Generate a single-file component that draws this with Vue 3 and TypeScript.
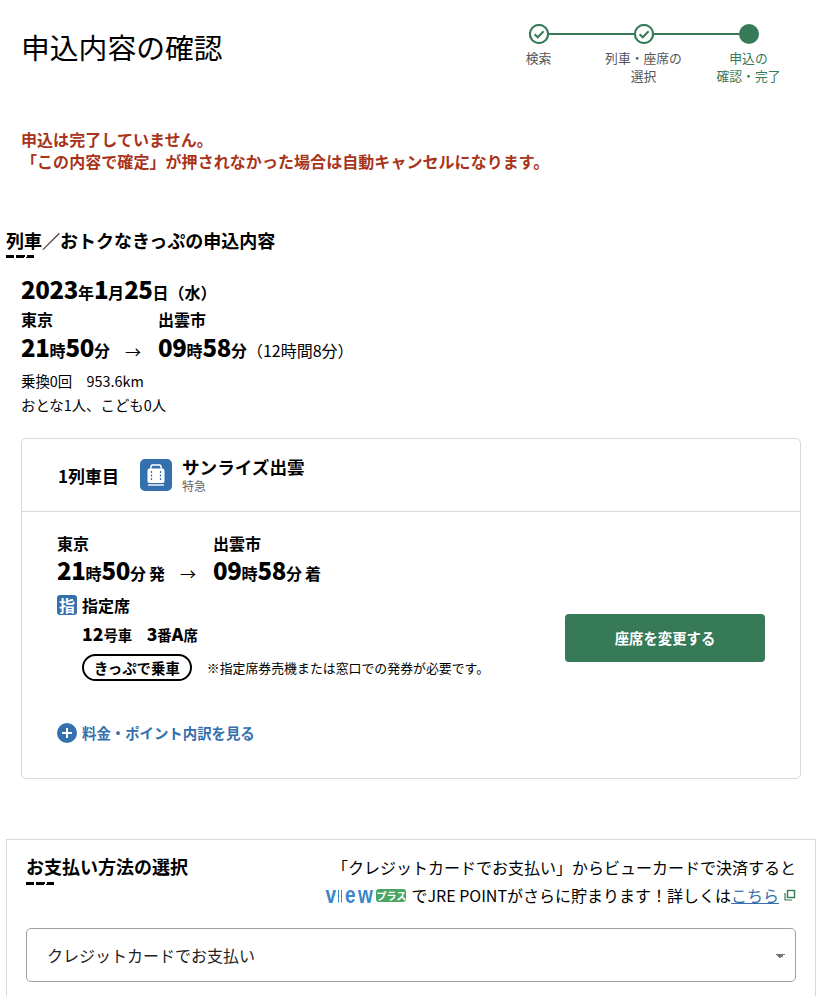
<script setup lang="ts">
import { ref } from 'vue'

interface Step {
  label: string[]
  done: boolean
}

const steps: Step[] = [
  { label: ['検索'], done: true },
  { label: ['列車・座席の', '選択'], done: true },
  { label: ['申込の', '確認・完了'], done: false }
]

const payment = ref('credit')
</script>

<template>
  <div class="page">
    <header class="top">
      <h1 class="title">申込内容の確認</h1>
      <ol class="stepper">
        <li v-for="(step, i) in steps" :key="i" class="step" :class="{ current: !step.done }">
          <span class="dot">
            <svg v-if="step.done" width="20" height="20" viewBox="0 0 20 20" fill="none">
              <circle cx="10" cy="10" r="9" fill="#fff" stroke="#367a58" stroke-width="2" />
              <path d="M5.6 10.200l3.200 3.100 5.800-6" stroke="#367a58" stroke-width="2" />
            </svg>
          </span>
          <span class="step-label">
            <template v-for="line in step.label" :key="line">{{ line }}<br /></template>
          </span>
        </li>
      </ol>
    </header>

    <p class="warning">
      申込は完了していません。<br />
      「この内容で確定」が押されなかった場合は自動キャンセルになります。
    </p>

    <h2 class="section-title outer">列車／おトクなきっぷの申込内容</h2>

    <section class="summary">
      <div class="date"><b>2023</b>年<b>1</b>月<b>25</b>日<span class="dow">（水）</span></div>
      <div class="route">
        <div class="stop">
          <div class="station">東京</div>
          <div class="time"><b>21</b>時<b>50</b>分</div>
        </div>
        <span class="arrow">→</span>
        <div class="stop">
          <div class="station">出雲市</div>
          <div class="time"><b>09</b>時<b>58</b>分<span class="duration">（12時間8分）</span></div>
        </div>
      </div>
      <p class="meta first">乗換0回　953.6km</p>
      <p class="meta">おとな1人、こども0人</p>
    </section>

    <section class="card">
      <div class="card-head">
        <span class="nth">1列車目</span>
        <span class="train-icon">
          <svg width="22" height="24" viewBox="0 0 22 24" fill="none">
            <path d="M5.500 6l.8-3.200c.2-.6.6-.9 1.200-.9h7c.6 0 1 .3 1.200.9l.8 3.200" stroke="#fff" stroke-width="1.500" />
            <path d="M4.500 5.500h13c1.200 0 2 .8 2 2v10.500c0 1.200-.8 2-2 2h-13c-1.200 0-2-.8-2-2V7.500c0-1.200.8-2 2-2z" fill="#fff" />
            <path d="M3 22h16" stroke="#fff" stroke-width="1.400" />
            <path d="M6.500 8v10M15.500 8v10" stroke="#3370ad" stroke-width="1.200" stroke-dasharray="2 1.500" />
          </svg>
        </span>
        <div class="train-name">
          <div class="name">サンライズ出雲</div>
          <div class="kind">特急</div>
        </div>
      </div>

      <div class="card-body">
        <div class="card-route">
          <div class="card-stop">
            <div class="station">東京</div>
            <div class="time"><b>21</b>時<b>50</b>分<span class="suffix">発</span></div>
          </div>
          <span class="arrow">→</span>
          <div class="card-stop">
            <div class="station">出雲市</div>
            <div class="time"><b>09</b>時<b>58</b>分<span class="suffix">着</span></div>
          </div>
        </div>

        <div class="seat-row">
          <div>
            <div class="seat-type"><span class="seat-badge">指</span>指定席</div>
            <div class="seat-no"><b>12</b>号車　<b>3</b>番<b>A</b>席</div>
            <div class="ticket-row">
              <span class="pill">きっぷで乗車</span>
              <span class="note">※指定席券売機または窓口での発券が必要です。</span>
            </div>
          </div>
          <button class="change-btn" type="button">座席を変更する</button>
        </div>

        <a class="detail-link" href="#">
          <svg width="20" height="20" viewBox="0 0 20 20">
            <circle cx="10" cy="10" r="10" fill="#3370ad" />
            <path d="M10 5v10M5 10h10" stroke="#fff" stroke-width="2" />
          </svg>
          料金・ポイント内訳を見る
        </a>
      </div>
    </section>

    <section class="payment">
      <div class="payment-head">
        <h2 class="section-title">お支払い方法の選択</h2>
        <div class="promo">
          <div>「クレジットカードでお支払い」からビューカードで決済すると</div>
          <div class="promo-line">
            <span class="view-logo">v<i class="view-bars"></i>ew</span>
            <span class="plus-badge">プラス</span>
            <span>でJRE POINTがさらに貯まります！詳しくは<a class="here" href="#">こちら</a></span>
            <svg class="ext" width="12" height="12" viewBox="0 0 12 12" fill="none" stroke="#367a58">
              <rect x="3.500" y="1.500" width="7" height="7" stroke-width="1.400" />
              <path d="M1 4v7h7" stroke-width="1.200" />
            </svg>
          </div>
        </div>
      </div>
      <select v-model="payment" class="pay-select">
        <option value="credit">クレジットカードでお支払い</option>
      </select>
    </section>
  </div>
</template>

<style scoped>
.page {
  width: 820px;
  height: 996px;
  overflow: hidden;
  background: #fff;
  color: #000;
  font-family: "Noto Sans CJK JP", "Noto Sans", sans-serif;
  box-sizing: border-box;
}

.top {
  display: flex;
  justify-content: space-between;
  padding: 24px 19px 0 21px;
}

.title {
  margin: 0;
  padding-top: 2px;
  font-size: 28.8px;
  line-height: 42px;
  font-weight: 400;
}

.stepper {
  display: grid;
  grid-template-columns: repeat(3, 105px);
  margin: 0;
  padding: 0;
  list-style: none;
}

.step {
  position: relative;
  display: flex;
  flex-direction: column;
  align-items: center;
  color: #555;
}

.step:not(:last-child)::after {
  content: "";
  position: absolute;
  top: 9px;
  left: 50%;
  width: 100%;
  height: 2px;
  background: #367a58;
}

.dot {
  position: relative;
  z-index: 1;
  width: 20px;
  height: 20px;
  border-radius: 50%;
  background: #367a58;
}

.dot svg {
  display: block;
}

.step.current {
  color: #367a58;
}

.step-label {
  margin-top: 5px;
  font-size: 12.8px;
  line-height: 18px;
  text-align: center;
}

.warning {
  margin: 43px 0 0 21px;
  color: #a8341a;
  font-size: 16px;
  line-height: 22px;
  font-weight: 700;
  letter-spacing: 0.06px;
}

.section-title {
  position: relative;
  margin: 0;
  font-size: 18px;
  line-height: 26px;
  font-weight: 700;
}

.section-title::after {
  content: "";
  position: absolute;
  left: 0;
  bottom: -5px;
  width: 28px;
  height: 3px;
  background: repeating-linear-gradient(110deg, #000 0 8px, transparent 8px 10px);
}

.section-title.outer {
  margin: 55px 0 0 6px;
}

.summary {
  margin: 20px 0 0 21px;
}

.date {
  font-size: 16px;
  line-height: 31px;
  font-weight: 700;
}

.date b,
.time b {
  font-size: 24px;
  letter-spacing: -0.4px;
}

.dow {
  font-size: 16px;
}

.route {
  display: flex;
  align-items: flex-end;
}

.stop:first-child {
  width: 104px;
}

.route .arrow {
  width: 33px;
  line-height: 30px;
}

.route .time {
  padding-top: 1px;
}

.arrow {
  font-size: 16px;
  font-weight: 400;
}

.station {
  font-size: 16px;
  line-height: 22px;
  font-weight: 700;
}

.time {
  font-size: 16px;
  line-height: 32px;
  font-weight: 700;
  white-space: nowrap;
}

.duration {
  font-size: 16px;
  font-weight: 400;
}

.meta {
  margin: 0;
  font-size: 14.4px;
  line-height: 24px;
}

.meta.first {
  margin-top: 3px;
}

.card {
  margin: 21px 19px 0 21px;
  border: 1px solid #d9d9d9;
  border-radius: 5px;
}

.card-head {
  display: flex;
  align-items: center;
  height: 72px;
  padding-left: 36px;
  border-bottom: 1px solid #d9d9d9;
}

.nth {
  width: 82px;
  font-size: 17px;
  font-weight: 700;
}

.train-icon {
  display: flex;
  align-items: center;
  justify-content: center;
  width: 32px;
  height: 32px;
  margin-right: 10px;
  border-radius: 5px;
  background: #3370ad;
}

.name {
  font-size: 17.6px;
  line-height: 22px;
  font-weight: 700;
}

.kind {
  color: #666;
  font-size: 12px;
  line-height: 16px;
}

.card-body {
  padding: 20px 35px 33px 35px;
}

.card-route {
  display: flex;
  align-items: flex-end;
}

.card-stop:first-child {
  width: 123px;
}

.card-route .arrow {
  width: 33px;
  line-height: 32px;
}

.suffix {
  margin-left: 3px;
  font-size: 16px;
}

.seat-row {
  display: flex;
  justify-content: space-between;
  align-items: center;
}

.seat-type {
  display: flex;
  align-items: center;
  gap: 5px;
  margin-top: 5px;
  font-size: 16px;
  line-height: 22px;
  font-weight: 700;
}

.seat-badge {
  width: 20px;
  height: 20px;
  border-radius: 3px;
  background: #3370ad;
  color: #fff;
  font-size: 16px;
  line-height: 20px;
  text-align: center;
}

.seat-no {
  margin: 6px 0 0 25px;
  font-size: 14.4px;
  line-height: 24px;
  font-weight: 700;
}

.seat-no b {
  font-size: 17.6px;
}

.ticket-row {
  display: flex;
  align-items: center;
  gap: 15px;
  margin: 7px 0 0 25px;
}

.pill {
  padding: 0 10px;
  border: 2px solid #000;
  border-radius: 14px;
  font-size: 14.4px;
  line-height: 23px;
  font-weight: 700;
}

.note {
  font-size: 12.9px;
}

.change-btn {
  width: 200px;
  height: 48px;
  margin-top: 5px;
  border: 0;
  border-radius: 4px;
  background: #367a58;
  color: #fff;
  font-family: inherit;
  font-size: 14.4px;
  font-weight: 700;
}

.detail-link {
  display: flex;
  align-items: center;
  gap: 5px;
  margin-top: 40px;
  color: #3370ad;
  font-size: 14.4px;
  line-height: 24px;
  font-weight: 700;
  text-decoration: none;
}

.payment {
  margin: 60px 4px 0 6px;
  padding: 13px 19px 40px 19px;
  border: 1px solid #d9d9d9;
  border-bottom: 0;
}

.payment-head {
  display: flex;
  justify-content: space-between;
}

.payment .section-title {
  height: 26px;
}

.payment .section-title::after {
  bottom: -6px;
}

.promo {
  font-size: 16px;
  line-height: 28px;
  text-align: right;
}

.promo-line {
  display: flex;
  justify-content: flex-end;
  align-items: center;
}

.view-logo {
  color: #3a86c8;
  font-family: "Liberation Sans", sans-serif;
  font-size: 19px;
  line-height: 28px;
  font-weight: 700;
  letter-spacing: 2.5px;
  transform: scaleY(1.25);
}

.view-bars {
  display: inline-block;
  width: 2px;
  height: 10px;
  margin: 0 3px 0 -0.5px;
  border-left: 1px solid #3a86c8;
  border-right: 1px solid #3a86c8;
}

.plus-badge {
  width: 30px;
  height: 13px;
  margin: 0 5px 0 1px;
  border-radius: 3px;
  background: #4aa564;
  color: #fff;
  font-size: 10px;
  line-height: 13px;
  font-weight: 700;
  text-align: center;
}

.here {
  color: #3370ad;
  text-decoration: underline;
}

.ext {
  margin-left: 5px;
}

.pay-select {
  display: block;
  width: 100%;
  height: 54px;
  margin-top: 19px;
  padding: 0 20px;
  border: 1px solid #a0a0a0;
  border-radius: 5px;
  appearance: none;
  color: #222;
  font-family: inherit;
  font-size: 16px;
  background: #fff no-repeat;
  background-image:
    linear-gradient(45deg, transparent 50%, #777 50%),
    linear-gradient(-45deg, transparent 50%, #777 50%);
  background-size: 5px 5px;
  background-position: right 15px top 25px, right 10px top 25px;
}
</style>
